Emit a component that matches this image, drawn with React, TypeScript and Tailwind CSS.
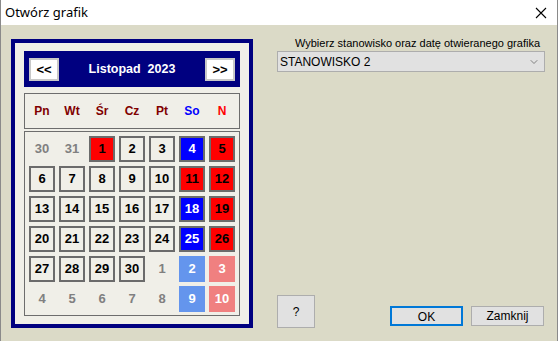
import { ChevronDown } from 'lucide-react'

type Cell = { n: number; kind: 'out' | 'day' | 'red' | 'blue' | 'outBlue' | 'outRed' }

const weeks: Cell[][] = [
  [
    { n: 30, kind: 'out' },
    { n: 31, kind: 'out' },
    { n: 1, kind: 'red' },
    { n: 2, kind: 'day' },
    { n: 3, kind: 'day' },
    { n: 4, kind: 'blue' },
    { n: 5, kind: 'red' },
  ],
  [
    { n: 6, kind: 'day' },
    { n: 7, kind: 'day' },
    { n: 8, kind: 'day' },
    { n: 9, kind: 'day' },
    { n: 10, kind: 'day' },
    { n: 11, kind: 'red' },
    { n: 12, kind: 'red' },
  ],
  [
    { n: 13, kind: 'day' },
    { n: 14, kind: 'day' },
    { n: 15, kind: 'day' },
    { n: 16, kind: 'day' },
    { n: 17, kind: 'day' },
    { n: 18, kind: 'blue' },
    { n: 19, kind: 'red' },
  ],
  [
    { n: 20, kind: 'day' },
    { n: 21, kind: 'day' },
    { n: 22, kind: 'day' },
    { n: 23, kind: 'day' },
    { n: 24, kind: 'day' },
    { n: 25, kind: 'blue' },
    { n: 26, kind: 'red' },
  ],
  [
    { n: 27, kind: 'day' },
    { n: 28, kind: 'day' },
    { n: 29, kind: 'day' },
    { n: 30, kind: 'day' },
    { n: 1, kind: 'out' },
    { n: 2, kind: 'outBlue' },
    { n: 3, kind: 'outRed' },
  ],
  [
    { n: 4, kind: 'out' },
    { n: 5, kind: 'out' },
    { n: 6, kind: 'out' },
    { n: 7, kind: 'out' },
    { n: 8, kind: 'out' },
    { n: 9, kind: 'outBlue' },
    { n: 10, kind: 'outRed' },
  ],
]

const cellClass: Record<Cell['kind'], string> = {
  out: 'text-[#808080]',
  day: 'border-2 border-[#6b6b6b] bg-[#f0efe8] text-black',
  red: 'border-2 border-[#6b6b6b] bg-[#ff0000] text-black',
  blue: 'border-2 border-[#6b6b6b] bg-[#0000ff] text-white',
  outBlue: 'bg-[#6495ed] text-white',
  outRed: 'bg-[#f08080] text-white',
}

const dayNames = [
  { t: 'Pn', c: 'text-[#800000]' },
  { t: 'Wt', c: 'text-[#800000]' },
  { t: 'Śr', c: 'text-[#800000]' },
  { t: 'Cz', c: 'text-[#800000]' },
  { t: 'Pt', c: 'text-[#800000]' },
  { t: 'So', c: 'text-[#0000ff]' },
  { t: 'N', c: 'text-[#ff0000]' },
]

export default function App() {
  return (
    <div className="w-[558px] h-[341px] flex flex-col border-x border-[#8a8a8a] bg-[#dbdac7] font-['Liberation_Sans',Arial,sans-serif]">
      {/* Title bar */}
      <div className="h-[25px] bg-white flex items-center justify-between pl-[4px] pr-[10px] shrink-0">
        <span className="text-[13px] text-black font-['Noto_Sans','Liberation_Sans',sans-serif] leading-none">Otwórz grafik</span>
        <svg width="12" height="12" viewBox="0 0 12 12" className="text-black">
          <path d="M1 1 L11 11 M11 1 L1 11" stroke="currentColor" strokeWidth="1.1" />
        </svg>
      </div>

      <div className="flex flex-1 min-h-0">
        {/* Calendar */}
        <div className="ml-[10px] mt-[14px] w-[242px] h-[289px] border-4 border-[#000080] bg-[#f0efe8] pt-[8px] px-[9px] flex flex-col">
          <div className="h-[36px] bg-[#000080] flex items-center justify-between px-[5px]">
            <button className="w-[30px] h-[23px] bg-white border-2 border-[#c8c8c8] text-[13px] font-bold text-black leading-none">&lt;&lt;</button>
            <span className="text-white font-bold text-[12.5px] whitespace-pre">Listopad  2023</span>
            <button className="w-[30px] h-[23px] bg-white border-2 border-[#c8c8c8] text-[13px] font-bold text-black leading-none">&gt;&gt;</button>
          </div>

          <div className="mt-[6px] h-[36px] border border-[#6d6d6d] px-[4px] grid grid-cols-[repeat(7,26px)] gap-x-[4px] items-center">
            {dayNames.map((d) => (
              <span key={d.t} className={`text-center text-[12px] font-bold ${d.c}`}>
                {d.t}
              </span>
            ))}
          </div>

          <div className="mt-[2px] h-[185px] border border-[#6d6d6d] p-[4px] grid grid-cols-[repeat(7,26px)] grid-rows-[repeat(6,26px)] gap-[4px]">
            {weeks.flat().map((c, i) => (
              <div
                key={i}
                className={`flex items-center justify-center text-[13px] font-bold ${cellClass[c.kind]}`}
              >
                {c.n}
              </div>
            ))}
          </div>
        </div>

        {/* Right panel */}
        <div className="ml-[24px] w-[268px] flex flex-col pb-[13px] text-[12px] text-black">
          <div className="mt-[11px] h-[14px] leading-[14px] flex justify-end pr-[5px]">
            <span className="whitespace-nowrap text-[11px]">Wybierz stanowisko oraz datę otwieranego grafika</span>
          </div>
          <div className="mt-[1px] h-[21px] bg-[#e1e1e1] border border-[#adadad] flex items-center justify-between pl-[2px] pr-[4px]">
            <span>STANOWISKO 2</span>
            <ChevronDown className="w-[12px] h-[12px] text-[#606060]" strokeWidth={1.5} />
          </div>

          <div className="mt-auto flex items-end justify-between">
            <button className="w-[38px] h-[33px] bg-[#e1e1e1] border border-[#adadad] text-[12px]">?</button>
            <div className="flex gap-[8px] mb-[2px] mr-[1px]">
              <button className="w-[73px] h-[20px] bg-[#e1e1e1] border-2 border-[#0078d7] text-[12px]">OK</button>
              <button className="w-[73px] h-[20px] bg-[#e1e1e1] border border-[#adadad] text-[12px]">Zamknij</button>
            </div>
          </div>
        </div>
      </div>
    </div>
  )
}
